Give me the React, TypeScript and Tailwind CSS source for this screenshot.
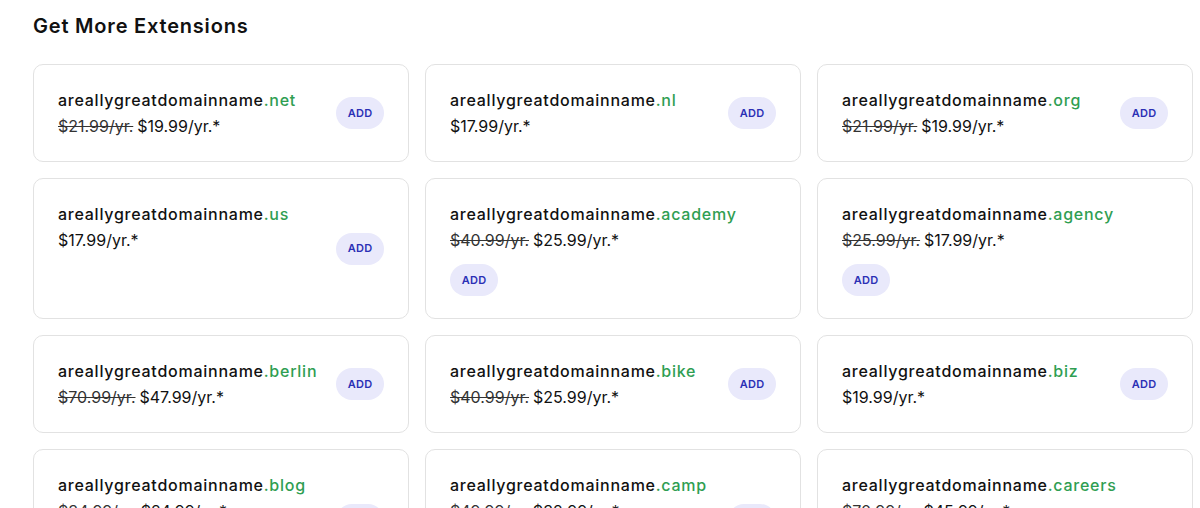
const domains = [
  { tld: 'net', old: '$21.99/yr.', price: '$19.99' },
  { tld: 'nl', price: '$17.99' },
  { tld: 'org', old: '$21.99/yr.', price: '$19.99' },
  { tld: 'us', price: '$17.99' },
  { tld: 'academy', old: '$40.99/yr.', price: '$25.99' },
  { tld: 'agency', old: '$25.99/yr.', price: '$17.99' },
  { tld: 'berlin', old: '$70.99/yr.', price: '$47.99' },
  { tld: 'bike', old: '$40.99/yr.', price: '$25.99' },
  { tld: 'biz', price: '$19.99' },
  { tld: 'blog', old: '$34.99/yr.', price: '$24.99' },
  { tld: 'camp', old: '$49.99/yr.', price: '$32.99' },
  { tld: 'careers', old: '$70.99/yr.', price: '$45.99' },
];

function DomainCard({ tld, old, price }: { tld: string; old?: string; price: string }) {
  return (
    <div className="rounded-[10px] border border-[#e2e2e2] bg-white px-6 py-[22px] flex flex-wrap items-center justify-between gap-x-3 gap-y-[11px]">
      <div className="self-start text-[16px] leading-[26px] text-[#111]">
        <p className="font-medium tracking-[0.75px]">
          areallygreatdomainname<span className="text-[#2f9e52]">.{tld}</span>
        </p>
        <p>
          {old && <span className="line-through text-[#333] mr-1">{old}</span>}
          {price}/yr.*
        </p>
      </div>
      <button className="h-8 w-12 rounded-full bg-[#e9e9fb] text-[11px] font-semibold text-[#2b30b5] tracking-wide">
        ADD
      </button>
    </div>
  );
}

export default function App() {
  return (
    <div className="min-h-screen bg-white pl-[33px] pt-[11px] font-['Inter',sans-serif]">
      <h2 className="text-[20px] leading-[30px] font-semibold tracking-[0.8px] text-[#111]">Get More Extensions</h2>
      <div className="mt-[23px] grid w-[1160px] grid-cols-3 gap-4">
        {domains.map((d) => (
          <DomainCard key={d.tld} {...d} />
        ))}
      </div>
    </div>
  );
}
